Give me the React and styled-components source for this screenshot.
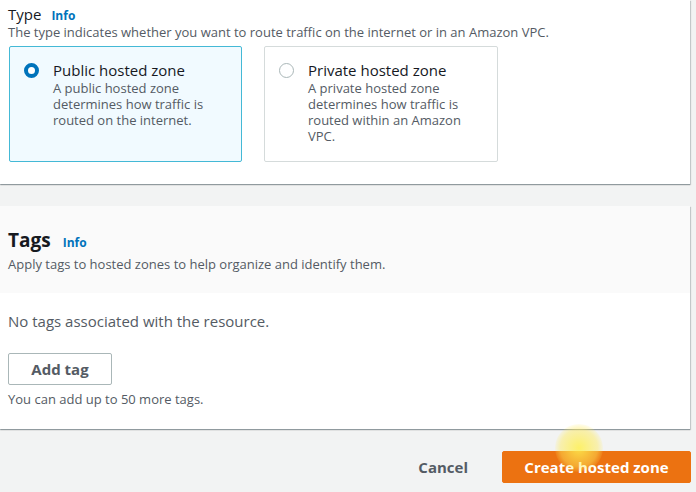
import {createGlobalStyle, styled} from 'styled-components';

const GlobalStyle = createGlobalStyle`
    body {
        margin: 0;
        background: #f2f3f3;
        font-family: "Open Sans", "Noto Sans", sans-serif;
        color: #16191f;
    }
`;

const Page = styled.div`
    width: 696px;
    height: 492px;
    overflow: hidden;
    position: relative;
`;

const Panel = styled.section`
    width: 690px;
    background: #ffffff;
    box-shadow: 0 1px 1px 0 rgba(0, 28, 36, 0.3), 1px 1px 1px 0 rgba(0, 28, 36, 0.15);
    margin-top: ${({$gap}) => $gap || '0'};
`;

const TypeBody = styled.div`
    padding: 4px 8px 22px 8px;
`;

const LabelRow = styled.div`
    display: flex;
    align-items: baseline;
    gap: ${({$gap}) => $gap || '10px'};
`;

const Label = styled.span`
    font-size: ${({$size}) => $size || '15px'};
    font-weight: ${({$weight}) => $weight || 500};
    line-height: ${({$line}) => $line || '20px'};
    color: #16191f;
`;

const InfoLink = styled.a`
    font-size: 12px;
    font-weight: 700;
    color: #0073bb;
    text-decoration: none;
`;

const Hint = styled.p`
    margin: ${({$margin}) => $margin || '0'};
    font-size: ${({$size}) => $size || '13px'};
    line-height: ${({$line}) => $line || '16px'};
    color: #545b64;
`;

const CardRow = styled.div`
    display: flex;
    gap: 22px;
    margin-top: 6px;
    padding-left: 1px;
`;

const Card = styled.label`
    box-sizing: border-box;
    width: ${({$width}) => $width};
    height: 116px;
    display: flex;
    gap: 14px;
    padding: 13px 14px;
    background: ${({$selected}) => ($selected ? '#f1faff' : '#ffffff')};
    border: 1px solid ${({$selected}) => ($selected ? '#44b9d6' : '#d5dbdb')};
    border-radius: 2px;
`;

const Radio = styled.span`
    box-sizing: border-box;
    flex: none;
    width: 15px;
    height: 15px;
    margin-top: 3px;
    border-radius: 50%;
    background: #ffffff;
    border: ${({$checked}) => ($checked ? '4px solid #0073bb' : '1px solid #aab7b8')};
`;

const CardText = styled.div`
    display: flex;
    flex-direction: column;
`;

const CardTitle = styled.span`
    font-size: 15px;
    line-height: 20px;
    color: #16191f;
`;

const TagsHeader = styled.div`
    background: #fafafa;
    padding: 22px 8px 21px 8px;
`;

const TagsBody = styled.div`
    padding: 18px 8px 22px 8px;
`;

const OutlineButton = styled.button`
    box-sizing: border-box;
    width: 104px;
    height: 32px;
    padding: 0;
    margin-top: 22px;
    background: #ffffff;
    border: 1px solid #aab7b8;
    border-radius: 2px;
    font-family: inherit;
    font-size: 15px;
    font-weight: 700;
    color: #545b64;
`;

const Footer = styled.div`
    width: 691px;
    display: flex;
    justify-content: flex-end;
    align-items: center;
    gap: 34px;
    margin-top: 22px;
`;

const TextButton = styled.button`
    background: none;
    border: none;
    padding: 0;
    font-family: inherit;
    font-size: 15px;
    font-weight: 700;
    color: #545b64;
`;

const PrimaryButton = styled.button`
    box-sizing: border-box;
    width: 189px;
    height: 32px;
    background: #ec7211;
    border: 1px solid #ec7211;
    border-radius: 2px;
    font-family: inherit;
    font-size: 15px;
    font-weight: 700;
    color: #ffffff;
`;

const CursorGlow = styled.div`
    position: absolute;
    left: 555px;
    top: 424px;
    width: 48px;
    height: 48px;
    border-radius: 50%;
    background: radial-gradient(circle, rgba(255, 240, 80, 0.85) 0%, rgba(255, 235, 90, 0.45) 55%, rgba(255, 235, 90, 0) 75%);
    pointer-events: none;
`;

const zones = [
    {
        title: 'Public hosted zone',
        text: 'A public hosted zone determines how traffic is routed on the internet.',
        width: '233px',
        selected: true,
    },
    {
        title: 'Private hosted zone',
        text: 'A private hosted zone determines how traffic is routed within an Amazon VPC.',
        width: '234px',
        selected: false,
    },
];

export default function App() {
    return (
        <Page>
            <GlobalStyle/>
            <Panel>
                <TypeBody>
                    <LabelRow>
                        <Label>Type</Label>
                        <InfoLink href='#'>Info</InfoLink>
                    </LabelRow>
                    <Hint>
                        The type indicates whether you want to route traffic on the internet or in an Amazon VPC.
                    </Hint>
                    <CardRow>
                        {zones.map(zone => (
                            <Card key={zone.title} $width={zone.width} $selected={zone.selected}>
                                <Radio $checked={zone.selected}/>
                                <CardText>
                                    <CardTitle>{zone.title}</CardTitle>
                                    <Hint>{zone.text}</Hint>
                                </CardText>
                            </Card>
                        ))}
                    </CardRow>
                </TypeBody>
            </Panel>

            <Panel $gap='22px'>
                <TagsHeader>
                    <LabelRow $gap='12px'>
                        <Label $size='19px' $weight={700} $line='24px'>Tags</Label>
                        <InfoLink href='#'>Info</InfoLink>
                    </LabelRow>
                    <Hint $margin='4px 0 0 0'>Apply tags to hosted zones to help organize and identify them.</Hint>
                </TagsHeader>
                <TagsBody>
                    <Hint $size='15px' $line='20px'>No tags associated with the resource.</Hint>
                    <OutlineButton>Add tag</OutlineButton>
                    <Hint $margin='6px 0 0 0'>You can add up to 50 more tags.</Hint>
                </TagsBody>
            </Panel>

            <Footer>
                <TextButton>Cancel</TextButton>
                <PrimaryButton>Create hosted zone</PrimaryButton>
            </Footer>
            <CursorGlow/>
        </Page>
    );
}
